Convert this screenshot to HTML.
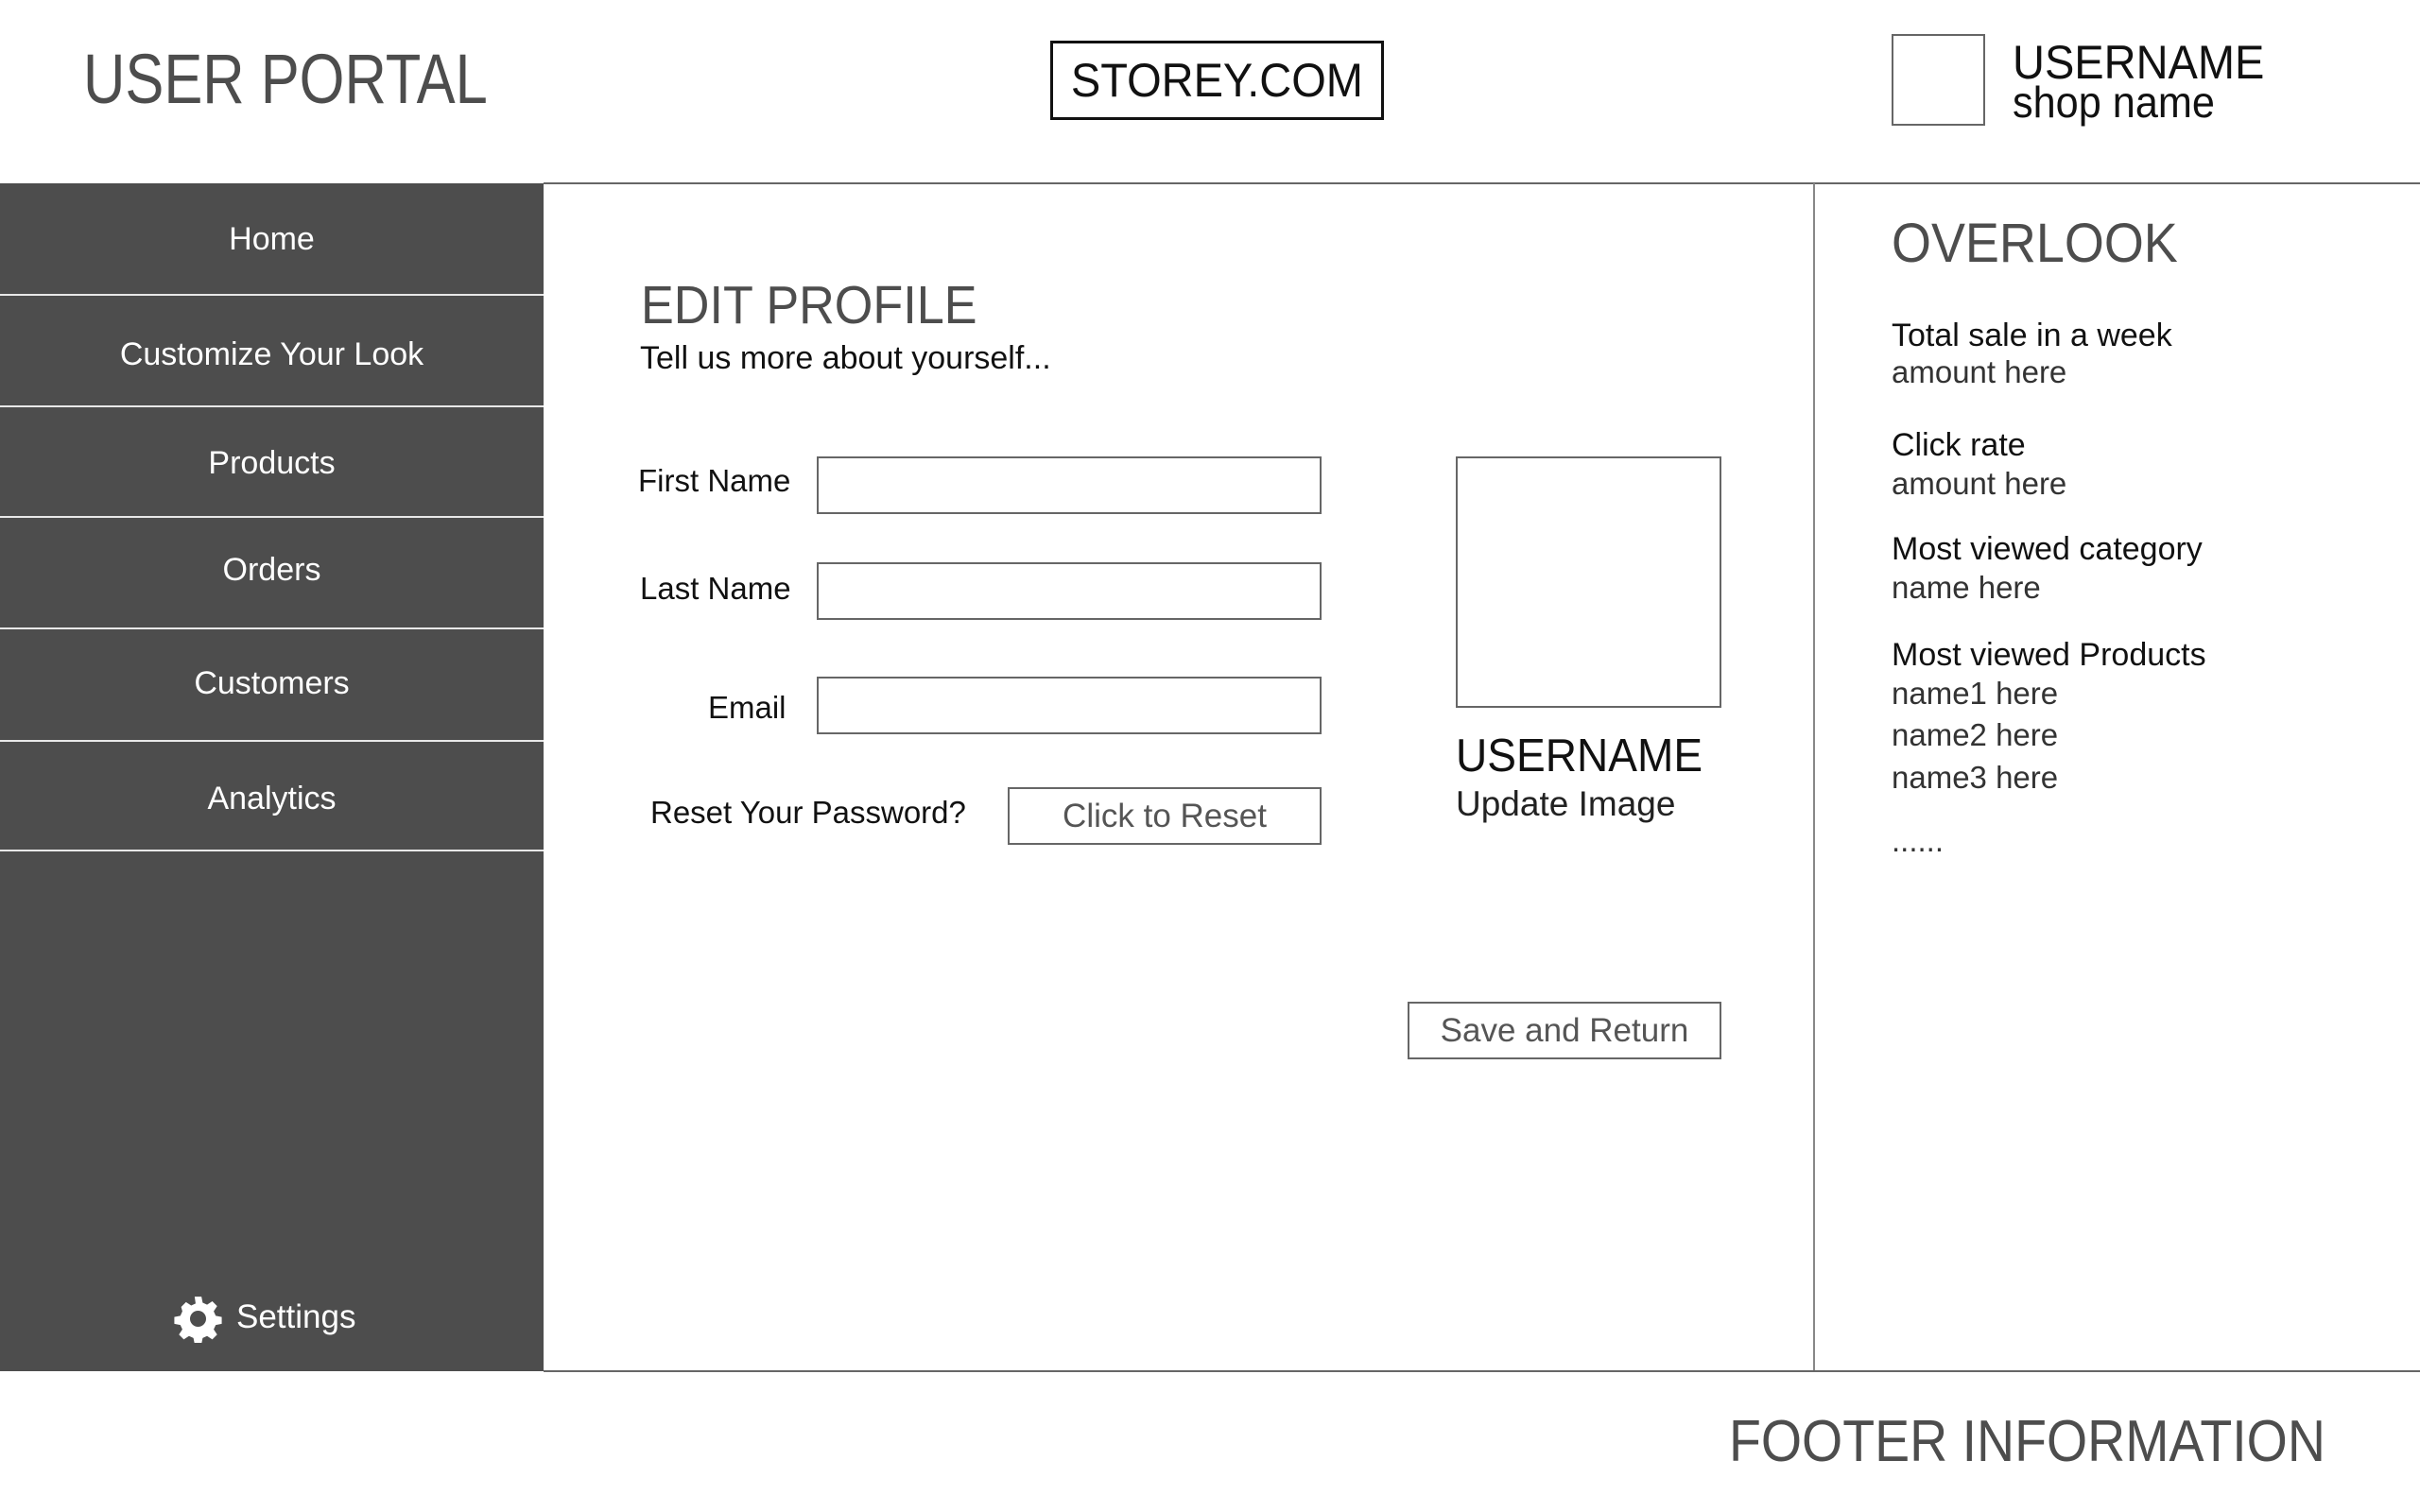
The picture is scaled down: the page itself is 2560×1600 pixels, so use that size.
<!DOCTYPE html>
<html><head><meta charset="utf-8"><style>
*{margin:0;padding:0;box-sizing:border-box}
body{width:2560px;height:1600px;background:#fff;position:relative;overflow:hidden;font-family:"Liberation Sans",sans-serif}
.a{position:absolute;white-space:nowrap}
.sx{transform-origin:0 50%}
.side{position:absolute;left:0;top:194px;width:575px;height:1257px;background:#4d4d4d}
.nav{position:absolute;left:0;width:575px;text-align:center;color:#fff;font-size:34px;line-height:60px}
.sep{position:absolute;left:0;width:575px;height:2px;background:#e8e8e8}
.box{position:absolute;border:2px solid #666;background:#fff}
.lbl{font-size:33px;color:#111}
.r{font-size:34px;color:#111}
.g{font-size:33px;color:#333}
</style></head><body>
<div class="a sx" style="left:88px;top:44px;font-size:74px;height:80px;line-height:80px;color:#4d4d4d;transform:scaleX(0.83)">USER PORTAL</div>
<div class="a" style="left:1111px;top:43px;width:353px;height:84px;border:3px solid #111;text-align:center;font-size:50px;line-height:78px;color:#111"><span style="display:inline-block;transform:scaleX(0.94)">STOREY.COM</span></div>
<div class="box" style="left:2001px;top:36px;width:99px;height:97px"></div>
<div class="a sx" style="left:2129px;top:38px;font-size:50px;line-height:56px;color:#111;transform:scaleX(0.94)">USERNAME</div>
<div class="a sx" style="left:2129px;top:80px;font-size:46px;line-height:56px;color:#111;transform:scaleX(0.94)">shop name</div>
<div class="a" style="left:575px;top:193px;width:1985px;height:2px;background:#666"></div>
<div class="side"></div>
<div class="sep" style="top:311px"></div><div class="sep" style="top:429px"></div><div class="sep" style="top:546px"></div><div class="sep" style="top:664px"></div><div class="sep" style="top:783px"></div><div class="sep" style="top:899px"></div>
<div class="nav" style="top:223px">Home</div>
<div class="nav" style="top:345px">Customize Your Look</div>
<div class="nav" style="top:460px">Products</div>
<div class="nav" style="top:573px">Orders</div>
<div class="nav" style="top:693px">Customers</div>
<div class="nav" style="top:815px">Analytics</div>
<svg class="a" style="left:184px;top:1370px" width="51" height="51" viewBox="0 0 24 24"><path fill="#fff" fill-rule="evenodd" d="M10.3 1h3.4l.6 3 2.2 1 2.6-1.7 2.4 2.4-1.7 2.6 1 2.2 3 .6v3.4l-3 .6-1 2.2 1.7 2.6-2.4 2.4-2.6-1.7-2.2 1-.6 3h-3.4l-.6-3-2.2-1-2.6 1.7-2.4-2.4 1.7-2.6-1-2.2-3-.6v-3.4l3-.6 1-2.2L3.6 6.1 6 3.7l2.6 1.7 2.2-1zM12 8a4 4 0 1 0 0 8 4 4 0 0 0 0-8z"/></svg>
<div class="a" style="left:250px;top:1364px;font-size:35px;line-height:60px;color:#fff">Settings</div>
<div class="a" style="left:1918px;top:194px;width:2px;height:1257px;background:#888"></div>
<div class="a" style="left:575px;top:1450px;width:1985px;height:2px;background:#666"></div>
<div class="a sx" style="left:1829px;top:1486px;font-size:62px;line-height:80px;color:#4d4d4d;transform:scaleX(0.895)">FOOTER INFORMATION</div>
<div class="a sx" style="left:678px;top:283px;font-size:57px;line-height:80px;color:#4d4d4d;transform:scaleX(0.915)">EDIT PROFILE</div>
<div class="a" style="left:677px;top:354px;font-size:34px;line-height:50px;color:#111">Tell us more about yourself...</div>
<div class="a lbl" style="left:675px;top:484px;line-height:50px">First Name</div>
<div class="a lbl" style="left:677px;top:598px;line-height:50px">Last Name</div>
<div class="a lbl" style="left:749px;top:724px;line-height:50px">Email</div>
<div class="a lbl" style="left:688px;top:835px;line-height:50px">Reset Your Password?</div>
<div class="box" style="left:864px;top:483px;width:534px;height:61px"></div>
<div class="box" style="left:864px;top:595px;width:534px;height:61px"></div>
<div class="box" style="left:864px;top:716px;width:534px;height:61px"></div>
<div class="box" style="left:1066px;top:833px;width:332px;height:61px;text-align:center;font-size:35px;line-height:57px;color:#555">Click to Reset</div>
<div class="box" style="left:1540px;top:483px;width:281px;height:266px"></div>
<div class="a sx" style="left:1540px;top:770px;font-size:49px;line-height:60px;color:#111;transform:scaleX(0.94)">USERNAME</div>
<div class="a" style="left:1540px;top:826px;font-size:37px;line-height:50px;color:#222">Update Image</div>
<div class="box" style="left:1489px;top:1060px;width:332px;height:61px;text-align:center;font-size:35px;line-height:57px;color:#555">Save and Return</div>
<div class="a sx" style="left:2001px;top:218px;font-size:58px;line-height:80px;color:#4d4d4d;transform:scaleX(0.93)">OVERLOOK</div>
<div class="a r" style="left:2001px;top:335px;line-height:40px">Total sale in a week</div>
<div class="a g" style="left:2001px;top:374px;line-height:40px">amount here</div>
<div class="a r" style="left:2001px;top:451px;line-height:40px">Click rate</div>
<div class="a g" style="left:2001px;top:492px;line-height:40px">amount here</div>
<div class="a r" style="left:2001px;top:561px;line-height:40px">Most viewed category</div>
<div class="a g" style="left:2001px;top:602px;line-height:40px">name here</div>
<div class="a r" style="left:2001px;top:673px;line-height:40px">Most viewed Products</div>
<div class="a g" style="left:2001px;top:714px;line-height:40px">name1 here</div>
<div class="a g" style="left:2001px;top:758px;line-height:40px">name2 here</div>
<div class="a g" style="left:2001px;top:803px;line-height:40px">name3 here</div>
<div class="a g" style="left:2001px;top:870px;line-height:40px">......</div>
</body></html>
